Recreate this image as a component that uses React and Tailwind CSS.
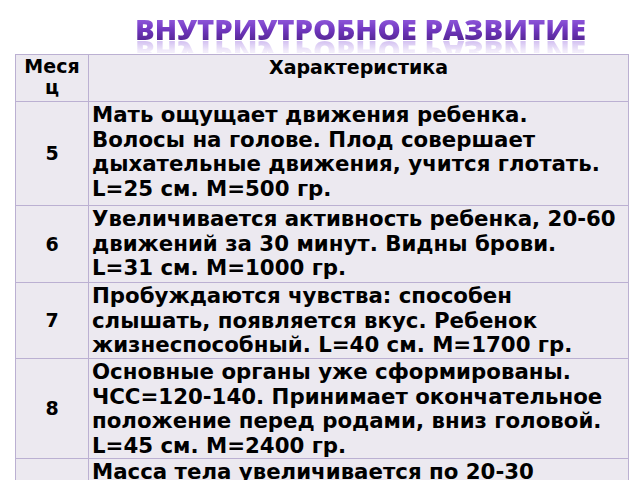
export default function App() {
  const rows = [
    {
      m: "5",
      lines: [
        "Мать ощущает движения ребенка.",
        "Волосы на голове. Плод совершает",
        "дыхательные движения, учится глотать.",
        "L=25 см. М=500 гр.",
      ],
      h: "h-[104px]",
    },
    {
      m: "6",
      lines: [
        "Увеличивается активность ребенка, 20-60",
        "движений за 30 минут. Видны брови.",
        "L=31 см. М=1000 гр.",
      ],
      h: "h-[77px]",
    },
    {
      m: "7",
      lines: [
        "Пробуждаются чувства: способен",
        "слышать, появляется вкус. Ребенок",
        "жизнеспособный. L=40 см. М=1700 гр.",
      ],
      h: "h-[76px]",
    },
    {
      m: "8",
      lines: [
        "Основные органы уже сформированы.",
        "ЧСС=120-140. Принимает окончательное",
        "положение перед родами, вниз головой.",
        "L=45 см. М=2400 гр.",
      ],
      h: "h-[100px]",
    },
    {
      m: "9",
      lines: ["Масса тела увеличивается по 20-30", "граммов в день."],
      h: "h-[60px]",
    },
  ];
  const titleFont = { fontFamily: '"Open Sans", sans-serif' };
  return (
    <div className="w-[640px] h-[480px] overflow-hidden bg-white relative">
      <div className="h-[54px] relative">
        <div
          className="absolute left-[135px] top-[15px] text-[28.5px] leading-[28.5px] font-extrabold whitespace-nowrap bg-gradient-to-b from-[#9c64e6] via-[#7238c0] to-[#4d2188] bg-clip-text text-transparent"
          style={{ ...titleFont, transform: "scaleX(1.025)", transformOrigin: "left top" }}
        >
          ВНУТРИУТРОБНОЕ РАЗВИТИЕ
        </div>
        <div className="absolute left-[135px] top-[40px] w-[490px] h-[13px] overflow-hidden opacity-80">
          <div
            className="text-[28.5px] leading-[28.5px] font-extrabold whitespace-nowrap bg-gradient-to-b from-[#ffffff] via-[#efe7fa] to-[#b99be8] bg-clip-text text-transparent"
            style={{ ...titleFont, transform: "scale(1.025, -1)", transformOrigin: "left 25.3px", marginTop: "-25px" }}
          >
            ВНУТРИУТРОБНОЕ РАЗВИТИЕ
          </div>
        </div>
      </div>
      <table
        className="ml-[15px] w-[614px] border-collapse bg-[#ece9f0] text-black font-bold"
        style={{ fontFamily: '"DejaVu Sans", sans-serif' }}
      >
        <tbody>
          <tr className="h-[47px]">
            <td className="w-[73px] border border-[#bbb0d2] align-top text-center text-[19px] leading-[21px] pt-[1px]">
              Меся
              <br />ц
            </td>
            <td className="border border-[#bbb0d2] align-top text-center text-[19px] leading-[21px] pt-[2px]">
              Характеристика
            </td>
          </tr>
          {rows.map((r) => (
            <tr key={r.m} className={r.h}>
              <td className="border border-[#bbb0d2] text-center align-middle text-[19px]">
                {r.m}
              </td>
              <td className="border border-[#bbb0d2] align-top pl-[3px] pt-[1px] text-[21.3px] leading-[24.5px] whitespace-nowrap">
                {r.lines.map((l, i) => (
                  <div key={i}>{l}</div>
                ))}
              </td>
            </tr>
          ))}
        </tbody>
      </table>
    </div>
  );
}
